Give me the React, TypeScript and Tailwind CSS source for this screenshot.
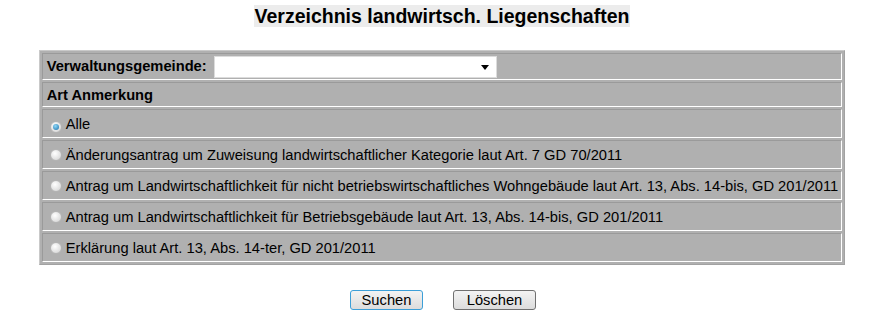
import { useState } from "react";

const optionen = [
  "Alle",
  "Änderungsantrag um Zuweisung landwirtschaftlicher Kategorie laut Art. 7 GD 70/2011",
  "Antrag um Landwirtschaftlichkeit für nicht betriebswirtschaftliches Wohngebäude laut Art. 13, Abs. 14-bis, GD 201/2011",
  "Antrag um Landwirtschaftlichkeit für Betriebsgebäude laut Art. 13, Abs. 14-bis, GD 201/2011",
  "Erklärung laut Art. 13, Abs. 14-ter, GD 201/2011",
];

// Zelle mit "inset" Rahmen wie in der alten Tabelle
const zelle =
  "border border-t-[#9a9a9a] border-l-[#9a9a9a] border-b-white border-r-white px-[3px] py-0 text-left align-middle";

function Radio({ checked }: { checked: boolean }) {
  return (
    <span className="ml-[4px] mr-[4px] inline-flex h-[12px] w-[12px] items-center justify-center rounded-full border border-[#b4b4b4] bg-[radial-gradient(circle_at_40%_35%,#ffffff,#cfcfcf)] align-[-1px]">
      {checked && (
        <span className="h-[6px] w-[6px] rounded-full bg-[radial-gradient(circle_at_40%_35%,#8fd8f8,#1a6fa8)]" />
      )}
    </span>
  );
}

export default function App() {
  const [auswahl, setAuswahl] = useState(0);

  return (
    <div className="min-h-[331px] bg-white pt-[5px] font-['Liberation_Sans',Arial,sans-serif] text-[14.7px] text-black">
      <div className="text-center">
        <span className="inline-block bg-[#ececec] px-[1px] text-[19.5px] font-bold leading-[22px]">
          Verzeichnis landwirtsch. Liegenschaften
        </span>
      </div>

      <table className="mx-auto mt-[21px] w-[806px] border-separate border-spacing-[2px] border border-t-[#c9c9c9] border-l-[#c9c9c9] border-b-[#a2a2a2] border-r-[#a2a2a2] bg-[#b0b0b0]">
        <tbody>
          <tr>
            <td className={zelle + " h-[27px] font-bold"}>
              <span className="ml-[1px]">Verwaltungsgemeinde:</span>
              <span className="relative ml-[7px] inline-block h-[22px] w-[283px] border border-[#dcdcdc] bg-white align-middle">
                <span className="absolute right-[7px] top-[8px] h-0 w-0 border-x-[4px] border-t-[5px] border-x-transparent border-t-black" />
              </span>
            </td>
          </tr>
          <tr>
            <td className={zelle + " h-[25px] font-bold"}>
              <span className="ml-[1px]">Art Anmerkung</span>
            </td>
          </tr>
          {optionen.map((text, i) => (
            <tr key={i}>
              <td
                className={zelle + " h-[29px] cursor-default whitespace-nowrap"}
                onClick={() => setAuswahl(i)}
              >
                <Radio checked={auswahl === i} />
                {text}
              </td>
            </tr>
          ))}
        </tbody>
      </table>

      <div className="mt-[25px] flex justify-center gap-[30px] pl-[2px]">
        <button className="h-[20px] w-[73px] rounded-[3px] border border-[#3c9fd8] bg-[linear-gradient(#f3f3f3,#dcdcdc)] text-[14.7px] leading-[18px]">
          Suchen
        </button>
        <button className="h-[20px] w-[83px] rounded-[3px] border border-[#707070] bg-[linear-gradient(#f3f3f3,#dcdcdc)] text-[14.7px] leading-[18px]">
          Löschen
        </button>
      </div>
    </div>
  );
}
